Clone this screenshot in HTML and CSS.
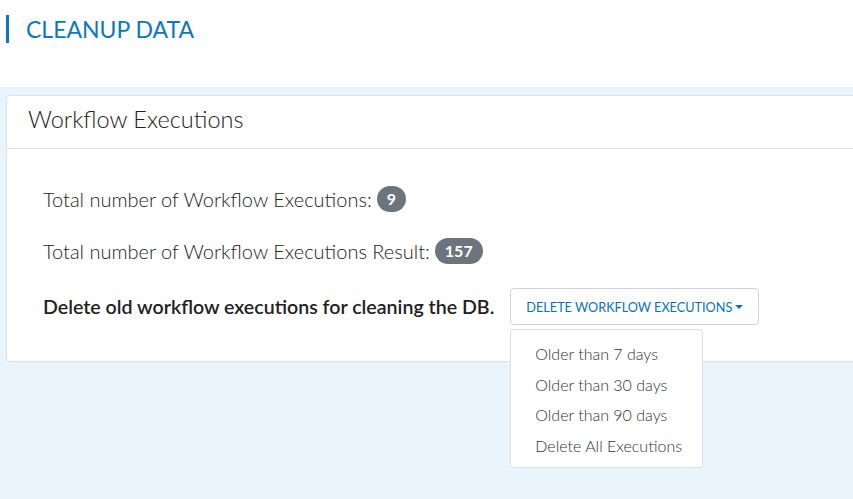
FILE: index.html
```html
<!DOCTYPE html>
<html>
<head>
<meta charset="utf-8">
<link rel="stylesheet" href="styles.css">
</head>
<body>
<div class="top">
  <h1 class="title">CLEANUP DATA</h1>
</div>
<div class="main">
  <div class="card">
    <div class="card-header">Workflow Executions</div>
    <div class="card-body">
      <div class="row">Total number of Workflow Executions: <span class="badge">9</span></div>
      <div class="row">Total number of Workflow Executions Result: <span class="badge">157</span></div>
      <div class="row action">
        <span class="strong">Delete old workflow executions for cleaning the DB.</span>
        <div class="dropdown">
          <button class="btn">DELETE WORKFLOW EXECUTIONS<span class="caret"></span></button>
          <ul class="menu">
            <li>Older than 7 days</li>
            <li>Older than 30 days</li>
            <li>Older than 90 days</li>
            <li>Delete All Executions</li>
          </ul>
        </div>
      </div>
    </div>
  </div>
</div>
</body>
</html>
```

FILE: styles.css
```css
html, body { margin: 0; padding: 0; }
body {
  font-family: Lato, "Noto Sans", sans-serif;
  color: #222;
  overflow: hidden;
  height: 499px;
  background: #eaf4fd;
}
.top {
  background: #fff;
  height: 87px;
  padding-top: 15px;
  box-sizing: border-box;
}
.title {
  margin: 0 0 0 6px;
  border-left: 3px solid #0b79be;
  padding-left: 17px;
  font-size: 23px;
  line-height: 28px;
  font-weight: 400;
  color: #0b79be;
}
.main {
  padding: 8px 0 0 6px;
}
.card {
  background: #fff;
  border: 1px solid #dcdfe3;
  border-radius: 4px;
  margin-right: -10px;
}
.card-header {
  height: 53px;
  box-sizing: border-box;
  display: flex;
  align-items: center;
  padding: 0 0 6px 21px;
  font-size: 23.5px;
  font-weight: 300;
  border-bottom: 1px solid #dcdfe3;
}
.card-body {
  padding: 37px 36px 36px;
  display: flex;
  flex-direction: column;
}
.row {
  display: flex;
  align-items: center;
  height: 26px;
  font-size: 20px;
  font-weight: 300;
  gap: 5px;
}
.row + .row { margin-top: 26px; }
.row.action { height: 37px; margin-top: 24px; gap: 16px; }
.strong { font-weight: 600; font-size: 19.6px; }
.badge {
  background: #6c757d;
  color: #fff;
  font-weight: 700;
  font-size: 16px;
  height: 26px;
  line-height: 26px;
  padding: 0 10px;
  border-radius: 13px;
}
.dropdown { position: relative; }
.btn {
  height: 37px;
  padding: 0 15px;
  background: #fff;
  border: 1px solid #cfd4d9;
  border-radius: 4px;
  color: #0a72b8;
  font-family: inherit;
  font-size: 12.7px;
  font-weight: 400;
  display: flex;
  align-items: center;
  white-space: nowrap;
}
.caret {
  display: inline-block;
  margin-left: 3px;
  border-left: 4px solid transparent;
  border-right: 4px solid transparent;
  border-top: 4px solid #0a72b8;
}
.menu {
  position: absolute;
  top: 41px;
  left: 0;
  width: 193px;
  box-sizing: border-box;
  margin: 0;
  padding: 9px 0 6px;
  list-style: none;
  background: #fff;
  border: 1px solid #dcdfe3;
  border-radius: 3px;
}
.menu li {
  padding: 0 24px;
  height: 30.5px;
  line-height: 30px;
  font-size: 16px;
  font-weight: 300;
  color: #333;
  white-space: nowrap;
}
```
